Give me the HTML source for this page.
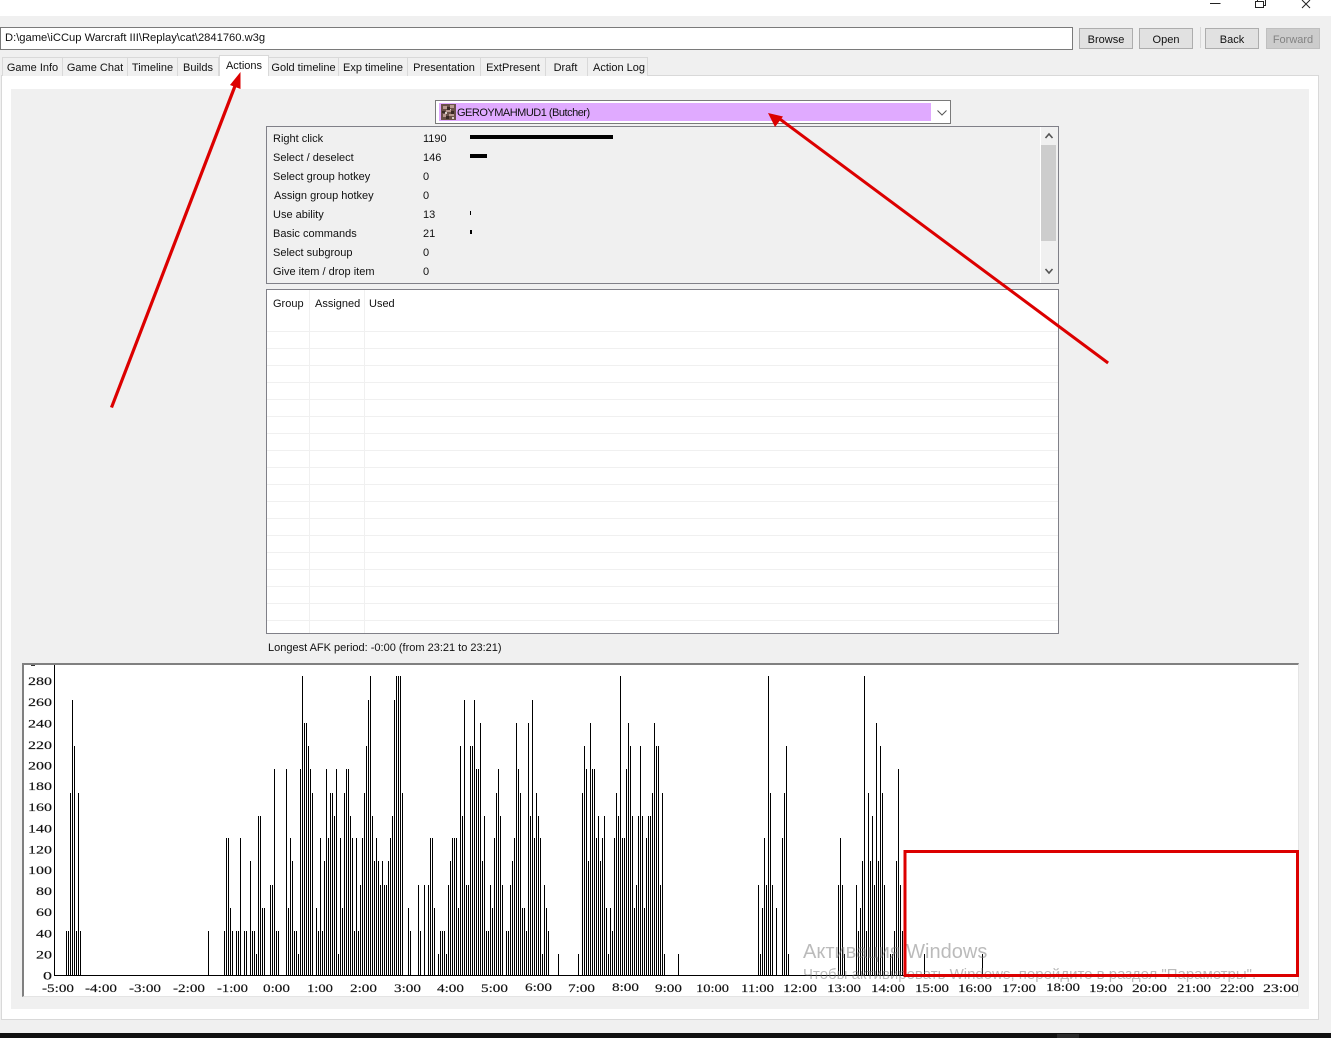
<!DOCTYPE html>
<html><head><meta charset="utf-8"><title>Replay</title>
<style>
html,body{margin:0;padding:0;width:1331px;height:1038px;overflow:hidden;background:#f0f0f0}
*{box-sizing:border-box}
body{position:relative;font:11px "Liberation Sans",sans-serif;color:#111}
.a{position:absolute}
.t{position:absolute;white-space:nowrap;line-height:14px;height:14px}
.tab{position:absolute;top:57px;height:19px;border:1px solid #d9d9d9;border-bottom:0;border-left:0;background:#f0f0f0;text-align:center;line-height:20px;white-space:nowrap}
.btn{position:absolute;top:28px;height:21px;background:#e1e1e1;border:1px solid #adadad;text-align:center;line-height:22px}
.bar{position:absolute;background:#000;left:470px}
.hl{position:absolute;left:267px;width:791px;height:1px;background:#f0f0f0}
</style></head><body>
<div class="a" style="left:0;top:0;width:1331px;height:16px;background:#fff"></div>
<svg class="a" style="left:1200px;top:0" width="131" height="16" fill="none" stroke="#222" stroke-width="1">
<path d="M10 3.500H20.500"/><path d="M55.500 1.500h8v6h-8z M57.500 1.500v-2h8v6h-2"/><path d="M102 0l8 8M110 0l-8 8"/></svg>

<div class="a" style="left:0;top:27px;width:1073px;height:23px;background:#fff;border:1px solid #7a7a7a"></div>
<div class="t" style="left:5px;top:31px;font-size:11.200px">D:\game\iCCup Warcraft III\Replay\cat\2841760.w3g</div>
<div class="btn" style="left:1079px;width:54px">Browse</div>
<div class="btn" style="left:1139px;width:54px">Open</div>
<div class="a" style="left:1200px;top:27px;width:1px;height:21px;background:#d8d8d8"></div>
<div class="btn" style="left:1205px;width:54px">Back</div>
<div class="btn" style="left:1266px;width:54px;background:#ccc;border-color:#bfbfbf;color:#838383">Forward</div>

<div class="a" style="left:1px;top:75px;width:1318px;height:945px;background:#fff;border:1px solid #d9d9d9"></div>
<div class="tab" style="left:2px;width:61px;border-left:1px solid #d9d9d9">Game Info</div>
<div class="tab" style="left:63px;width:65px">Game Chat</div>
<div class="tab" style="left:128px;width:50px">Timeline</div>
<div class="tab" style="left:178px;width:41px">Builds</div>
<div class="tab" style="left:219px;top:55px;width:50px;height:21px;background:#fff;border-left:1px solid #d9d9d9;line-height:20px">Actions</div>
<div class="tab" style="left:269px;width:70px">Gold timeline</div>
<div class="tab" style="left:339px;width:69px">Exp timeline</div>
<div class="tab" style="left:408px;width:73px">Presentation</div>
<div class="tab" style="left:481px;width:65px">ExtPresent</div>
<div class="tab" style="left:546px;width:42px;padding-right:2px">Draft</div>
<div class="tab" style="left:588px;width:60px;padding-left:3px">Action Log</div>

<div class="a" style="left:11px;top:89px;width:1298px;height:920px;background:#f0f0f0"></div>

<div class="a" style="left:435px;top:100px;width:516px;height:24px;background:#fff;border:1px solid #7a7a7a"></div>
<div class="a" style="left:439px;top:103px;width:492px;height:18px;background:#e0aaff"></div>
<svg class="a" style="left:441px;top:104px" width="15" height="16" shape-rendering="crispEdges">
<rect width="15" height="16" fill="#6a5048"/><path d="M2 2h4v3H2zM9 1h4v3H9zM5 6h5v2H5zM2 10h3v3H2zM8 10h5v2H8z" fill="#b89890"/><path d="M6 3h3v3H6zM1 7h3v2H1zM10 7h3v3h-3zM5 12h3v3H5z" fill="#3a2a24"/><path d="M4 8h2v2H4zM9 5h1v1H9zM11 13h2v2h-2z" fill="#d8ccc8"/></svg>
<div class="t" style="left:457px;top:106px;letter-spacing:-.5px">GEROYMAHMUD1 (Butcher)</div>
<svg class="a" style="left:936px;top:108px" width="12" height="10" fill="none" stroke="#555"><path d="M1.500 2.500l4.500 4.500 4.500-4.500"/></svg>

<div class="a" style="left:266px;top:126px;width:793px;height:158px;border:1px solid #808088"></div>
<div class="a" style="left:1040px;top:127px;width:1px;height:156px;background:#fff"></div>
<div class="a" style="left:1041px;top:145px;width:15px;height:96px;background:#cdcdcd"></div>
<svg class="a" style="left:1041px;top:128px" width="16" height="154" fill="none" stroke="#555" stroke-width="1.600"><path d="M4.500 10l3.500-4 3.500 4M4.500 141l3.500 4 3.500-4"/></svg>

<div class="t" style="left:273px;top:132px">Right click</div><div class="t" style="left:423px;top:132px">1190</div>
<div class="t" style="left:273px;top:151px">Select / deselect</div><div class="t" style="left:423px;top:151px">146</div>
<div class="t" style="left:273px;top:170px">Select group hotkey</div><div class="t" style="left:423px;top:170px">0</div>
<div class="t" style="left:274px;top:189px">Assign group hotkey</div><div class="t" style="left:423px;top:189px">0</div>
<div class="t" style="left:273px;top:208px">Use ability</div><div class="t" style="left:423px;top:208px">13</div>
<div class="t" style="left:273px;top:227px">Basic commands</div><div class="t" style="left:423px;top:227px">21</div>
<div class="t" style="left:273px;top:246px">Select subgroup</div><div class="t" style="left:423px;top:246px">0</div>
<div class="t" style="left:273px;top:265px">Give item / drop item</div><div class="t" style="left:423px;top:265px">0</div>
<div class="bar" style="top:135px;width:143px;height:4px"></div>
<div class="bar" style="top:154px;width:17px;height:4px"></div>
<div class="bar" style="top:211px;width:1px;height:4px"></div>
<div class="bar" style="top:230px;width:2px;height:4px"></div>

<div class="a" style="left:266px;top:289px;width:793px;height:345px;background:#fff;border:1px solid #808088"></div>
<div class="a" style="left:309px;top:290px;width:1px;height:343px;background:#f0f0f0"></div>
<div class="a" style="left:364px;top:290px;width:1px;height:343px;background:#f0f0f0"></div>
<div class="t" style="left:273px;top:297px">Group</div>
<div class="t" style="left:315px;top:297px">Assigned</div>
<div class="t" style="left:369px;top:297px">Used</div>
<div class="hl" style="top:331px"></div><div class="hl" style="top:348px"></div><div class="hl" style="top:365px"></div><div class="hl" style="top:382px"></div><div class="hl" style="top:399px"></div><div class="hl" style="top:416px"></div><div class="hl" style="top:433px"></div><div class="hl" style="top:450px"></div><div class="hl" style="top:467px"></div><div class="hl" style="top:484px"></div><div class="hl" style="top:501px"></div><div class="hl" style="top:518px"></div><div class="hl" style="top:535px"></div><div class="hl" style="top:552px"></div><div class="hl" style="top:569px"></div><div class="hl" style="top:586px"></div><div class="hl" style="top:603px"></div><div class="hl" style="top:620px"></div>

<div class="t" style="left:268px;top:641px">Longest AFK period: -0:00 (from 23:21 to 23:21)</div>

<div class="a" style="left:22px;top:663px;width:1277px;height:334px;background:#fff;border-top:2px solid #808080;border-left:2px solid #808080;border-right:1px solid #e4e4e4;border-bottom:1px solid #e4e4e4"></div>
<div class="a" style="left:31px;top:665px;width:4px;height:1px;background:#333"></div>
<svg class="a" style="left:0;top:0" width="1331" height="1038">
<g fill="none" stroke="#000" stroke-width="1" shape-rendering="crispEdges">
<path d="M54.500 665V975.500H1297"/>
<g transform="translate(.5 0)"><path d="M66 975V931M68 975V931M70 975V793M72 975V700M74 975V746M76 975V931M78 975V793M80 975V931M208 975V931M224 975V931M226 975V838M228 975V838M230 975V908M232 975V931M236 975V931M238 975V931M240 975V838M244 975V931M246 975V931M250 975V861M252 975V931M254 975V931M256 975V954M258 975V816M260 975V816M262 975V908M264 975V908M270 975V885M272 975V885M274 975V769M276 975V931M278 975V931M286 975V769M288 975V908M290 975V838M292 975V861M294 975V931M296 975V931M298 975V954M300 975V769M302 975V676M304 975V723M306 975V723M308 975V746M310 975V769M312 975V793M316 975V908M318 975V931M320 975V838M322 975V931M324 975V861M326 975V769M328 975V838M330 975V793M332 975V793M334 975V816M336 975V769M338 975V954M340 975V838M342 975V908M344 975V793M346 975V769M348 975V769M350 975V816M352 975V838M354 975V931M356 975V838M358 975V931M360 975V885M362 975V838M364 975V793M366 975V746M368 975V700M370 975V676M372 975V816M374 975V861M376 975V838M378 975V861M380 975V885M382 975V861M384 975V885M386 975V885M388 975V861M390 975V838M392 975V816M394 975V700M396 975V676M398 975V676M400 975V676M402 975V793M408 975V908M410 975V931M418 975V885M420 975V931M424 975V885M428 975V885M430 975V838M432 975V838M434 975V908M438 975V954M440 975V931M442 975V931M444 975V931M446 975V954M448 975V885M450 975V861M452 975V838M454 975V838M456 975V838M458 975V908M460 975V746M462 975V816M464 975V700M466 975V885M468 975V885M470 975V746M472 975V746M474 975V700M476 975V769M478 975V769M480 975V723M482 975V861M484 975V816M486 975V931M488 975V931M490 975V885M492 975V908M494 975V838M496 975V793M498 975V769M500 975V816M502 975V885M506 975V931M508 975V931M510 975V885M512 975V861M514 975V838M516 975V723M518 975V769M520 975V793M522 975V908M524 975V908M526 975V931M528 975V723M530 975V816M532 975V700M534 975V838M536 975V793M538 975V816M540 975V838M542 975V954M544 975V885M546 975V908M548 975V931M558 975V954M578 975V954M582 975V793M584 975V746M586 975V769M588 975V861M590 975V723M592 975V769M594 975V769M596 975V838M598 975V816M600 975V861M602 975V838M604 975V816M606 975V908M608 975V954M610 975V908M612 975V931M614 975V838M616 975V793M618 975V816M620 975V676M622 975V838M624 975V838M626 975V769M628 975V723M630 975V746M632 975V816M634 975V908M636 975V885M638 975V816M640 975V746M642 975V816M644 975V908M646 975V838M648 975V816M650 975V816M652 975V793M654 975V723M656 975V746M658 975V746M660 975V885M662 975V793M664 975V954M678 975V954M758 975V885M760 975V954M762 975V908M764 975V838M766 975V885M768 975V676M770 975V793M772 975V885M776 975V908M782 975V838M784 975V793M786 975V746M788 975V954M838 975V885M840 975V838M842 975V885M844 975V954M856 975V885M858 975V931M860 975V908M862 975V861M864 975V676M866 975V931M868 975V793M870 975V861M872 975V816M874 975V885M876 975V723M878 975V861M880 975V746M882 975V793M884 975V885M890 975V954M892 975V954M894 975V931M896 975V861M898 975V769M900 975V885M902 975V931M924 975V954M982 975V954M1296 975V954"/></g>
</g>
<g font-family="'Liberation Serif',serif" font-size="11.500" fill="#111" text-anchor="end" stroke="#111" stroke-width=".15">
<text x="52" y="685" textLength="24" lengthAdjust="spacingAndGlyphs">280</text>
<text x="52" y="706" textLength="24" lengthAdjust="spacingAndGlyphs">260</text>
<text x="52" y="727.500" textLength="24" lengthAdjust="spacingAndGlyphs">240</text>
<text x="52" y="749" textLength="24" lengthAdjust="spacingAndGlyphs">220</text>
<text x="52" y="769.500" textLength="24" lengthAdjust="spacingAndGlyphs">200</text>
<text x="52" y="790" textLength="24" lengthAdjust="spacingAndGlyphs">180</text>
<text x="52" y="811" textLength="24" lengthAdjust="spacingAndGlyphs">160</text>
<text x="52" y="832.500" textLength="24" lengthAdjust="spacingAndGlyphs">140</text>
<text x="52" y="853.500" textLength="24" lengthAdjust="spacingAndGlyphs">120</text>
<text x="52" y="874" textLength="24" lengthAdjust="spacingAndGlyphs">100</text>
<text x="52" y="895" textLength="16" lengthAdjust="spacingAndGlyphs">80</text>
<text x="52" y="916" textLength="16" lengthAdjust="spacingAndGlyphs">60</text>
<text x="52" y="937.500" textLength="16" lengthAdjust="spacingAndGlyphs">40</text>
<text x="52" y="958.500" textLength="16" lengthAdjust="spacingAndGlyphs">20</text>
<text x="52" y="979.500" textLength="9" lengthAdjust="spacingAndGlyphs">0</text>
</g>
<svg x="0" y="978" width="1298" height="20">
<g font-family="'Liberation Serif',serif" font-size="11.500" fill="#111" stroke="#111" stroke-width=".15">
<text x="42" y="14" textLength="32" lengthAdjust="spacingAndGlyphs">-5:00</text>
<text x="85" y="14" textLength="32" lengthAdjust="spacingAndGlyphs">-4:00</text>
<text x="129" y="14" textLength="32" lengthAdjust="spacingAndGlyphs">-3:00</text>
<text x="173" y="14" textLength="32" lengthAdjust="spacingAndGlyphs">-2:00</text>
<text x="217" y="14" textLength="31" lengthAdjust="spacingAndGlyphs">-1:00</text>
<text x="263" y="14" textLength="27" lengthAdjust="spacingAndGlyphs">0:00</text>
<text x="307" y="14" textLength="26" lengthAdjust="spacingAndGlyphs">1:00</text>
<text x="350" y="14" textLength="27" lengthAdjust="spacingAndGlyphs">2:00</text>
<text x="394" y="14" textLength="27" lengthAdjust="spacingAndGlyphs">3:00</text>
<text x="437" y="14" textLength="27" lengthAdjust="spacingAndGlyphs">4:00</text>
<text x="481" y="14" textLength="27" lengthAdjust="spacingAndGlyphs">5:00</text>
<text x="525" y="13" textLength="27" lengthAdjust="spacingAndGlyphs">6:00</text>
<text x="568" y="14" textLength="27" lengthAdjust="spacingAndGlyphs">7:00</text>
<text x="612" y="13" textLength="27" lengthAdjust="spacingAndGlyphs">8:00</text>
<text x="655" y="14" textLength="27" lengthAdjust="spacingAndGlyphs">9:00</text>
<text x="696" y="14" textLength="33" lengthAdjust="spacingAndGlyphs">10:00</text>
<text x="741" y="14" textLength="33" lengthAdjust="spacingAndGlyphs">11:00</text>
<text x="783" y="14" textLength="34" lengthAdjust="spacingAndGlyphs">12:00</text>
<text x="827" y="14" textLength="34" lengthAdjust="spacingAndGlyphs">13:00</text>
<text x="871" y="14" textLength="34" lengthAdjust="spacingAndGlyphs">14:00</text>
<text x="915" y="14" textLength="34" lengthAdjust="spacingAndGlyphs">15:00</text>
<text x="958" y="14" textLength="34" lengthAdjust="spacingAndGlyphs">16:00</text>
<text x="1002" y="14" textLength="34" lengthAdjust="spacingAndGlyphs">17:00</text>
<text x="1046" y="13" textLength="34" lengthAdjust="spacingAndGlyphs">18:00</text>
<text x="1089" y="14" textLength="34" lengthAdjust="spacingAndGlyphs">19:00</text>
<text x="1132" y="14" textLength="35" lengthAdjust="spacingAndGlyphs">20:00</text>
<text x="1177" y="14" textLength="34" lengthAdjust="spacingAndGlyphs">21:00</text>
<text x="1220" y="14" textLength="34" lengthAdjust="spacingAndGlyphs">22:00</text>
<text x="1263" y="14" textLength="36" lengthAdjust="spacingAndGlyphs">23:00</text>
</g></svg>
<g font-family="'Liberation Sans',sans-serif" fill="#777" fill-opacity=".5">
<text x="803" y="958" font-size="20">Активация Windows</text>
<text x="803" y="979" font-size="15">Чтобы активировать Windows, перейдите в раздел "Параметры".</text>
</g>
<rect x="905" y="851.500" width="392.500" height="124" fill="none" stroke="#dc0000" stroke-width="3"/>
<g fill="#dc0000" stroke="none">
<path d="M110 407L113 408L237.800 83.300L234.700 82.300Z"/>
<path d="M240.500 72L230 85L240.500 89Z"/>
<path d="M1109 361.800L1107.200 364.200L776.200 118.200L778 115.800Z"/>
<path d="M768 113L783 116.500L775 127Z"/>
</g>
</svg>
<div class="a" style="left:0;top:1033px;width:1331px;height:5px;background:#101010"></div>
<div class="a" style="left:1057px;top:1034px;width:22px;height:4px;background:#2a2a2a"></div>
</body></html>
